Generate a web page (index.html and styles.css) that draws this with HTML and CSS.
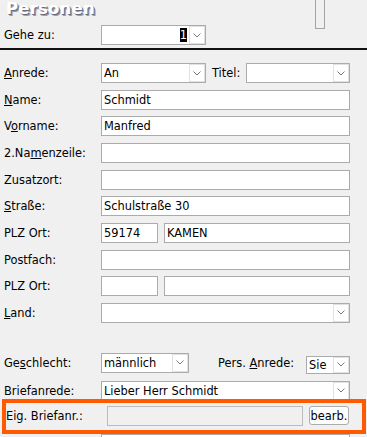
FILE: index.html
```html
<!DOCTYPE html>
<html>
<head>
    <title>Personen</title>
    <meta charset="UTF-8">
    <link rel="stylesheet" href="styles.css">
</head>
<body>
    <div class="head">
        <h1 class="title">Personen</h1>
        <div class="stub"></div>
        <span class="lbl goto-lbl">Gehe zu:</span>
        <div class="combo goto">
            <span class="val"><span class="sel">1</span></span>
            <span class="arrow"><svg width="8" height="5" viewBox="0 0 8 5"><path d="M0.5 0.5 L4 4 L7.5 0.5" fill="none" stroke="#7a7a7a"/></svg></span>
        </div>
    </div>
    <hr class="sep">

    <div class="form">
        <div class="row">
            <span class="lbl"><u>A</u>nrede:</span>
            <div class="field">
                <div class="combo w-anrede">
                    <span class="val">An</span>
                    <span class="arrow"><svg width="8" height="5" viewBox="0 0 8 5"><path d="M0.5 0.5 L4 4 L7.5 0.5" fill="none" stroke="#7a7a7a"/></svg></span>
                </div>
                <span class="lbl inline">Titel:</span>
                <div class="combo grow">
                    <span class="val"></span>
                    <span class="arrow"><svg width="8" height="5" viewBox="0 0 8 5"><path d="M0.5 0.5 L4 4 L7.5 0.5" fill="none" stroke="#7a7a7a"/></svg></span>
                </div>
            </div>
        </div>
        <div class="row">
            <span class="lbl"><u>N</u>ame:</span>
            <div class="box">Schmidt</div>
        </div>
        <div class="row">
            <span class="lbl">V<u>o</u>rname:</span>
            <div class="box">Manfred</div>
        </div>
        <div class="row">
            <span class="lbl">2.Na<u>m</u>enzeile:</span>
            <div class="box"></div>
        </div>
        <div class="row">
            <span class="lbl">Zusatzort:</span>
            <div class="box"></div>
        </div>
        <div class="row">
            <span class="lbl"><u>S</u>traße:</span>
            <div class="box">Schulstraße 30</div>
        </div>
        <div class="row">
            <span class="lbl">PLZ Ort:</span>
            <div class="field">
                <div class="box plz">59174</div>
                <div class="box grow">KAMEN</div>
            </div>
        </div>
        <div class="row">
            <span class="lbl">Postfach:</span>
            <div class="box"></div>
        </div>
        <div class="row">
            <span class="lbl">PLZ Ort:</span>
            <div class="field">
                <div class="box plz"></div>
                <div class="box grow"></div>
            </div>
        </div>
        <div class="row">
            <span class="lbl"><u>L</u>and:</span>
            <div class="combo">
                <span class="val"></span>
                <span class="arrow"><svg width="8" height="5" viewBox="0 0 8 5"><path d="M0.5 0.5 L4 4 L7.5 0.5" fill="none" stroke="#7a7a7a"/></svg></span>
            </div>
        </div>
    </div>

    <div class="form lower">
        <div class="row">
            <span class="lbl">Ge<u>s</u>chlecht:</span>
            <div class="field top">
                <div class="combo w-sex">
                    <span class="val">männlich</span>
                    <span class="arrow"><svg width="8" height="5" viewBox="0 0 8 5"><path d="M0.5 0.5 L4 4 L7.5 0.5" fill="none" stroke="#7a7a7a"/></svg></span>
                </div>
                <span class="lbl inline push">Pers. <u>A</u>nrede:</span>
                <div class="combo w-sie">
                    <span class="val">Sie</span>
                    <span class="arrow"><svg width="8" height="5" viewBox="0 0 8 5"><path d="M0.5 0.5 L4 4 L7.5 0.5" fill="none" stroke="#7a7a7a"/></svg></span>
                </div>
            </div>
        </div>
        <div class="row">
            <span class="lbl">Briefanrede:</span>
            <div class="combo">
                <span class="val">Lieber Herr Schmidt</span>
                <span class="arrow"><svg width="8" height="5" viewBox="0 0 8 5"><path d="M0.5 0.5 L4 4 L7.5 0.5" fill="none" stroke="#7a7a7a"/></svg></span>
            </div>
        </div>
        <div class="mark">
            <span class="lbl">Eig. Briefanr.:</span>
            <div class="box off"></div>
            <button class="btn">bearb.</button>
        </div>
        <div class="row">
            <span class="lbl"></span>
            <div class="box"></div>
        </div>
    </div>
</body>
</html>
```

FILE: styles.css
```css
body {
    margin: 0;
    background-color: #F0F0F0;
    color: #000;
    font-family: "DejaVu Sans", sans-serif;
    font-size: 11.4px;
    overflow: hidden;
}
.head {
    display: grid;
    grid-template-columns: 101px 105px 109px 10px 1fr;
    grid-template-rows: 25px 20px;
}
.title {
    grid-column: 1 / 3;
    grid-row: 1;
    margin: 0;
    padding-left: 6px;
    font-size: 16.5px;
    line-height: 18px;
    font-weight: 900;
    color: #fff;
    letter-spacing: 0.2px;
    text-shadow: 1px 1px 0 #6c6c7c, 2px 2px 0 #9c9cac;
}
.stub {
    grid-column: 4;
    grid-row: 1 / 3;
    height: 29px;
    box-sizing: border-box;
    border: 1px solid #a3a3a3;
    border-top: none;
}
.goto-lbl {
    grid-column: 1;
    grid-row: 2;
}
.goto {
    grid-column: 2;
    grid-row: 2;
}
.goto .val {
    text-align: right;
}
.sel {
    background-color: #000;
    color: #fff;
}
.sep {
    margin: 3px 0 0;
    border: none;
    height: 2px;
    background-color: #111;
}
.form {
    display: flex;
    flex-direction: column;
    gap: 6.67px;
    padding: 13px 17px 0 0;
}
.form.lower {
    gap: 8px;
    padding-top: 30px;
}
.row {
    display: grid;
    grid-template-columns: 101px 1fr;
    align-items: center;
    height: 20px;
}
.lbl {
    padding-left: 4px;
    white-space: nowrap;
    align-self: center;
}
.lbl.inline {
    padding-left: 0;
    margin: 0 6px;
}
.lbl.push {
    margin: 0 12px 0 auto;
}
.field {
    display: flex;
    align-items: center;
    height: 20px;
}
.field.top {
    align-items: flex-start;
}
.grow {
    flex: 1;
}
.box {
    box-sizing: border-box;
    height: 20px;
    border: 1px solid #ababab;
    background-color: #fff;
    padding: 0 2px;
    line-height: 18px;
}
.box.plz {
    width: 57px;
    margin-right: 6px;
}
.box.off {
    background-color: #F0F0F0;
    border-color: #bcbcbc;
}
.combo {
    display: flex;
    box-sizing: border-box;
    height: 20px;
    border: 1px solid #ababab;
    background-color: #fff;
}
.combo .val {
    flex: 1;
    padding: 0 2px;
    line-height: 18px;
    overflow: hidden;
}
.combo .arrow {
    width: 16px;
    box-sizing: border-box;
    border: 1px solid #e1e1e1;
    display: flex;
    align-items: center;
    justify-content: center;
}
.w-anrede {
    width: 105px;
}
.w-sex {
    width: 88px;
}
.w-sie {
    width: 44px;
    height: 18px;
    margin-top: 3px;
}
.w-sie .val {
    line-height: 16px;
}
.mark {
    display: grid;
    grid-template-columns: 95px 1fr 40px;
    column-gap: 6px;
    align-items: center;
    margin: -10px -16px -8px 2px;
    padding: 3px 13px 4px 0;
    border: 4px solid #FF5A00;
}
.mark .lbl {
    padding-left: 0;
}
.btn {
    height: 19px;
    padding: 0;
    border: 1px solid #adadad;
    border-radius: 3px;
    background-color: #fdfdfd;
    font-family: inherit;
    font-size: 11.4px;
    color: #000;
}
```
